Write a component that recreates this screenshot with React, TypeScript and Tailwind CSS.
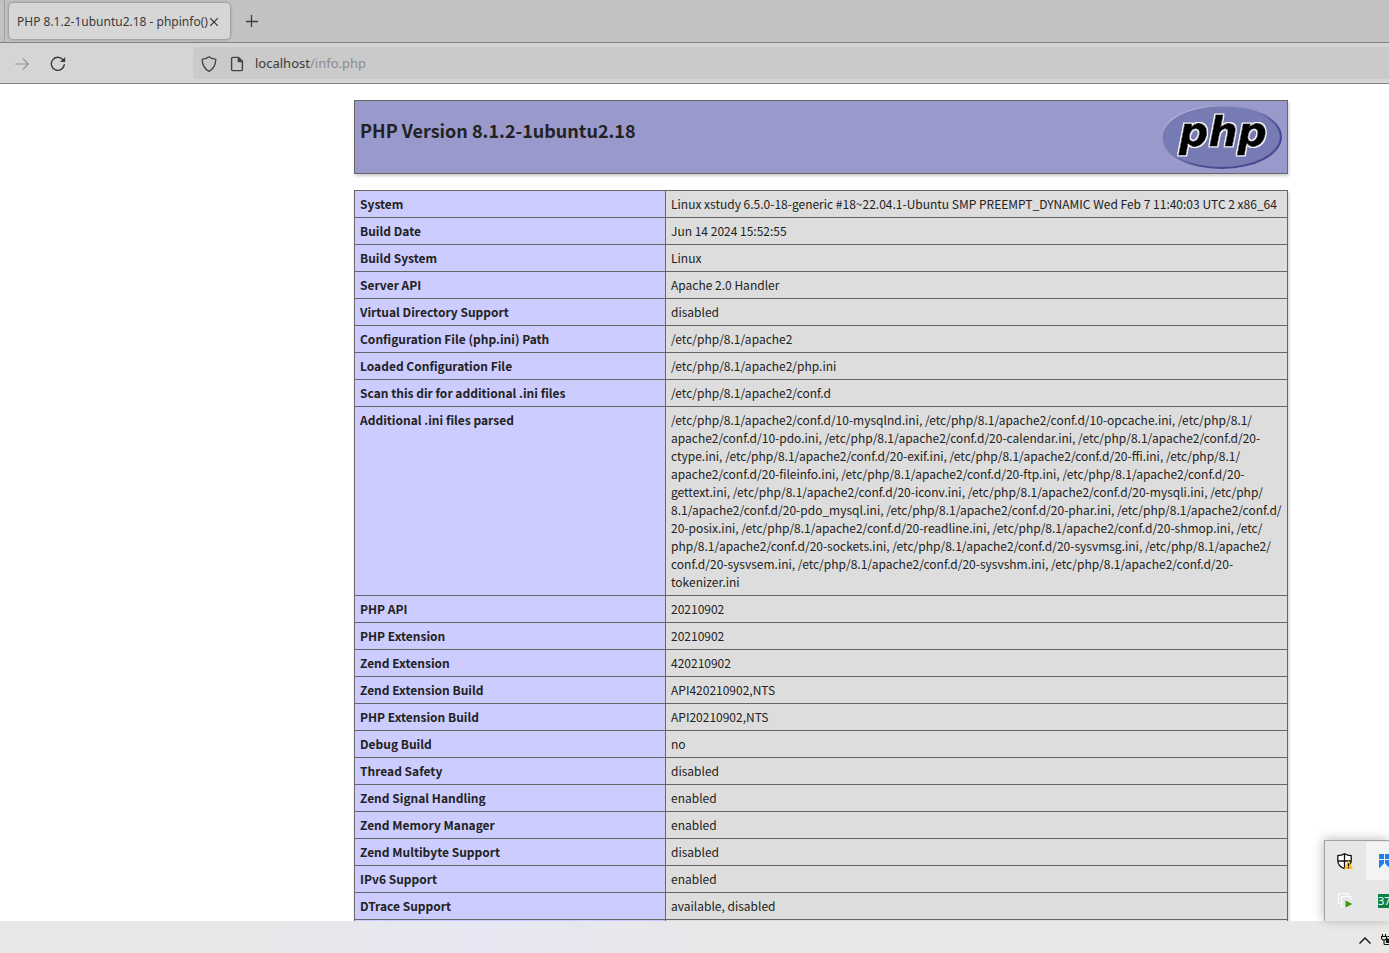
const confDir = "/etc/php/8.1/apache2/conf.d/";

const iniFiles = [
  "10-mysqlnd", "10-opcache", "10-pdo", "20-calendar", "20-ctype", "20-exif", "20-ffi",
  "20-fileinfo", "20-ftp", "20-gettext", "20-iconv", "20-mysqli", "20-pdo_mysql", "20-phar",
  "20-posix", "20-readline", "20-shmop", "20-sockets", "20-sysvmsg", "20-sysvsem",
  "20-sysvshm", "20-tokenizer",
].map((name) => `${confDir}${name}.ini`);

const rows: [string, string][] = [
  ["System", "Linux xstudy 6.5.0-18-generic #18~22.04.1-Ubuntu SMP PREEMPT_DYNAMIC Wed Feb 7 11:40:03 UTC 2 x86_64"],
  ["Build Date", "Jun 14 2024 15:52:55"],
  ["Build System", "Linux"],
  ["Server API", "Apache 2.0 Handler"],
  ["Virtual Directory Support", "disabled"],
  ["Configuration File (php.ini) Path", "/etc/php/8.1/apache2"],
  ["Loaded Configuration File", "/etc/php/8.1/apache2/php.ini"],
  ["Scan this dir for additional .ini files", "/etc/php/8.1/apache2/conf.d"],
  ["Additional .ini files parsed", breakable(iniFiles.join(", "))],
  ["PHP API", "20210902"],
  ["PHP Extension", "20210902"],
  ["Zend Extension", "420210902"],
  ["Zend Extension Build", "API420210902,NTS"],
  ["PHP Extension Build", "API20210902,NTS"],
  ["Debug Build", "no"],
  ["Thread Safety", "disabled"],
  ["Zend Signal Handling", "enabled"],
  ["Zend Memory Manager", "enabled"],
  ["Zend Multibyte Support", "disabled"],
  ["IPv6 Support", "enabled"],
  ["DTrace Support", "available, disabled"],
  ["", ""],
];

/* Lets long paths wrap after a slash inside a word. */
function breakable(text: string) {
  return text.replace(/([a-z0-9]\/)(?=[a-z0-9])/g, "$1\u200b");
}

function PhpLogo() {
  return (
    <svg className="h-16 w-[121px] shrink-0" viewBox="0 0 121 64" role="img" aria-label="PHP logo">
      <defs>
        <linearGradient id="rim" x1="0" y1="0" x2="1" y2="1">
          <stop offset="0.15" stopColor="#aeb2d5" />
          <stop offset="0.45" stopColor="#7478af" />
          <stop offset="0.65" stopColor="#484893" />
        </linearGradient>
        <filter id="outline" x="-10%" y="-10%" width="120%" height="120%">
          <feMorphology in="SourceAlpha" operator="dilate" radius="1.300" result="grown" />
          <feFlood floodColor="#fff" />
          <feComposite in2="grown" operator="in" result="halo" />
          <feMerge>
            <feMergeNode in="halo" />
            <feMergeNode in="SourceGraphic" />
          </feMerge>
        </filter>
      </defs>
      <ellipse cx="60.5" cy="32" rx="60.5" ry="32" fill="url(#rim)" />
      <ellipse cx="60.2" cy="31.800" rx="58.600" ry="30.300" fill="#777bb3" />
      <text
        x="62"
        y="41"
        textAnchor="middle"
        className="fill-black stroke-black font-['DejaVu_Sans',sans-serif] text-[41px] font-bold italic"
        strokeWidth="0.8"
        strokeLinejoin="miter"
        filter="url(#outline)"
      >
        php
      </text>
    </svg>
  );
}

function TabStrip() {
  return (
    <div className="flex h-[42px] shrink-0 items-center bg-[#c2c2c2]">
      <div className="h-full w-[5px] border-r border-[#a0a0a0]" />
      <div className="ml-1 flex h-9 w-[221px] items-center justify-between rounded bg-[#d6d6d6] pt-0.5 pr-3 pl-2 shadow-[0_0_3px_rgba(0,0,0,0.45)]">
        <span className="text-[12px] whitespace-nowrap">PHP 8.1.2-1ubuntu2.18 - phpinfo()</span>
        <button type="button" aria-label="Close tab">
          <svg className="size-2" viewBox="0 0 8 8" fill="none" stroke="#333" strokeWidth="1.2">
            <path d="M0 0l8 8M8 0L0 8" />
          </svg>
        </button>
      </div>
      <button type="button" aria-label="New tab" className="ml-4">
        <svg className="size-3" viewBox="0 0 12 12" fill="none" stroke="#3c3c3c" strokeWidth="1.3">
          <path d="M5.500 0v12M0 6.500h12" />
        </svg>
      </button>
    </div>
  );
}

function Toolbar() {
  return (
    <div className="flex h-[42px] shrink-0 items-center border-y border-[#828282] bg-[#d5d5d5]">
      <div className="flex items-center gap-[21px] pt-0.5 pl-[15px]">
        <button type="button" aria-label="Forward">
          <svg className="h-3 w-[14px]" viewBox="0 0 14 12" fill="none" stroke="#989898" strokeWidth="1.2" strokeLinecap="round" strokeLinejoin="round">
            <path d="M.6 6h12.6M8.3 1l5 5-5 5" />
          </svg>
        </button>
        <button type="button" aria-label="Reload">
          <svg className="size-4" viewBox="0 0 16 16" fill="none">
            <path d="M14.3 8.6A6.5 6.5 0 1 1 12.8 3.6" stroke="#3c3c3c" strokeWidth="1.4" strokeLinecap="round" />
            <path d="M15.2 1v4.6a.5.5 0 0 1-.5.5H10z" fill="#3c3c3c" />
          </svg>
        </button>
      </div>
      <div className="ml-[127px] flex h-8 flex-1 items-center rounded-l bg-[#cacaca] pt-0.5 pl-2">
        <svg className="size-4" viewBox="0 0 16 16" fill="none" stroke="#444" strokeWidth="1.3" strokeLinejoin="round">
          <path d="M8 .8c1.6 1.3 3.9 2.1 6.2 2.3.4 0 .7.4.6.8C14.5 9 12.8 13 8 15.3 3.200 13 1.500 9 1.200 3.900c0-.4.2-.8.6-.8C4.100 2.900 6.400 2.100 8 .8z" />
        </svg>
        <svg className="ml-3 size-4" viewBox="0 0 16 16" fill="none" stroke="#444" strokeWidth="1.4" strokeLinejoin="round">
          <path d="M9.300 1.400H3.800c-.7 0-1.200.5-1.200 1.200v10.800c0 .7.500 1.200 1.200 1.200h8.400c.7 0 1.200-.5 1.200-1.200V5.500z" />
          <path d="M9.300 1.400v4.100h4.100z" fill="#444" />
        </svg>
        <a href="#top" className="ml-2.5 text-[13px]">
          localhost<span className="text-[#8c8c8c]">/info.php</span>
        </a>
      </div>
    </div>
  );
}

function TrayPopup() {
  return (
    <div className="absolute right-0 bottom-8 grid h-[81px] w-[65px] grid-cols-[41px_23px] grid-rows-[38px_41px] border-t border-l border-[#a2a2a2] bg-[#e6e6e6] pt-px shadow-[-1px_-1px_10px_rgba(0,0,0,0.25)]">
      <div className="flex items-center justify-center pr-0.5">
        <svg className="h-[17px] w-4" viewBox="0 0 16 17">
          <path d="M7.500.8C5.500 2.100 3.300 2.700.8 2.700v5C.8 11.300 3.500 14 7.500 15.600c4-1.600 6.700-4.300 6.700-7.900v-5C11.700 2.700 9.500 2.100 7.500.8z" fill="#fff" stroke="#111" strokeWidth="1.300" />
          <path d="M7.500 1v14.500M1 8h13" stroke="#111" strokeWidth="1.300" />
          <path d="M11.500 7.500L16 16H7z" fill="#fdbf2d" />
          <path d="M11.500 10.200v3M11.500 14v1.200" stroke="#111" strokeWidth="1.300" />
        </svg>
      </div>
      <div className="flex items-center justify-end overflow-hidden bg-[#f3f3f3]">
        <svg className="h-4 w-[10px]" viewBox="0 0 10 16" fill="#1e80f0">
          <path d="M0 1h5v5H0zM6 1h4v5H6zM0 7h5v3.500L0 15.500zM6 7h4v7.500L6 10.500z" />
        </svg>
      </div>
      <div className="flex items-center justify-center pr-0.5">
        <svg className="h-[15px] w-4" viewBox="0 0 16 15">
          <path d="M3 10.500H1.500V.7h10V3" fill="none" stroke="#fff" />
          <path d="M8 13.500H4.500V3.500h9.500V7" fill="none" stroke="#fff" />
          <path d="M8.500 7.500l6.800 3.500-6.800 3.500z" fill="#3a9a12" />
        </svg>
      </div>
      <div className="flex items-center justify-end overflow-hidden">
        <span className="h-[14px] w-[11px] overflow-hidden bg-[#0f8044] text-[11px] leading-[14px] text-white">37</span>
      </div>
    </div>
  );
}

function Taskbar() {
  return (
    <footer className="flex h-8 shrink-0 items-center justify-end bg-linear-to-r from-[#e8e8e8] from-15% via-[#e6e7f2] via-35% to-[#e8e8e7] to-55% pt-1.5">
      <button type="button" aria-label="Show hidden icons">
        <svg className="h-[7px] w-3" viewBox="0 0 12 7" fill="none" stroke="#111" strokeWidth="1.400">
          <path d="M.5 6.500L6 1l5.500 5.500" />
        </svg>
      </button>
      <svg className="ml-2.5 h-3 w-2" viewBox="0 0 8 12" fill="none" stroke="#111" strokeWidth="1.100">
        <path d="M1.500 0v2.500M4.500 0v2.500M.5 2.500h5v2.200L4 6H2L.5 4.700zM3 6v3.500c0 .8.500 1 1 1h4M8 2.500H6.500M8 8.500H5" />
        <path d="M5.500 5H8v3.500H5.500z" fill="#111" />
      </svg>
    </footer>
  );
}

export default function App() {
  return (
    <div id="top" className="relative flex h-screen flex-col overflow-hidden bg-white font-['Noto_Sans',sans-serif] text-[#3a3a3a]">
      <TabStrip />
      <Toolbar />
      <main className="min-h-0 flex-1 overflow-hidden pt-4 pl-[253px] font-['Noto_Sans_CJK_SC','Noto_Sans_CJK_JP',sans-serif] text-[#222]">
        <div className="mx-auto w-[934px]">
          <header className="flex h-[74px] items-start justify-between border border-[#666] bg-[#9999cc] px-[5px] pt-1 shadow-[1px_2px_3px_#ccc]">
            <h1 className="mt-[11px] text-[18px] leading-7 font-bold">PHP Version 8.1.2-1ubuntu2.18</h1>
            <PhpLogo />
          </header>
          <table className="mt-4 w-full table-fixed border-collapse text-left align-top text-[12px] leading-[18px] shadow-[1px_2px_3px_#ccc]">
            <colgroup>
              <col className="w-[311px]" />
              <col />
            </colgroup>
            <tbody>
              {rows.map(([name, value], i) => (
                <tr key={i} className="h-[27px] align-top">
                  <th scope="row" className="border border-[#666] bg-[#ccccff] px-[5px] py-1 font-bold">{name}</th>
                  <td className="border border-[#666] bg-[#dddddd] py-1 pr-[3px] pl-[5px]">{value}</td>
                </tr>
              ))}
            </tbody>
          </table>
        </div>
      </main>
      <TrayPopup />
      <Taskbar />
    </div>
  );
}
